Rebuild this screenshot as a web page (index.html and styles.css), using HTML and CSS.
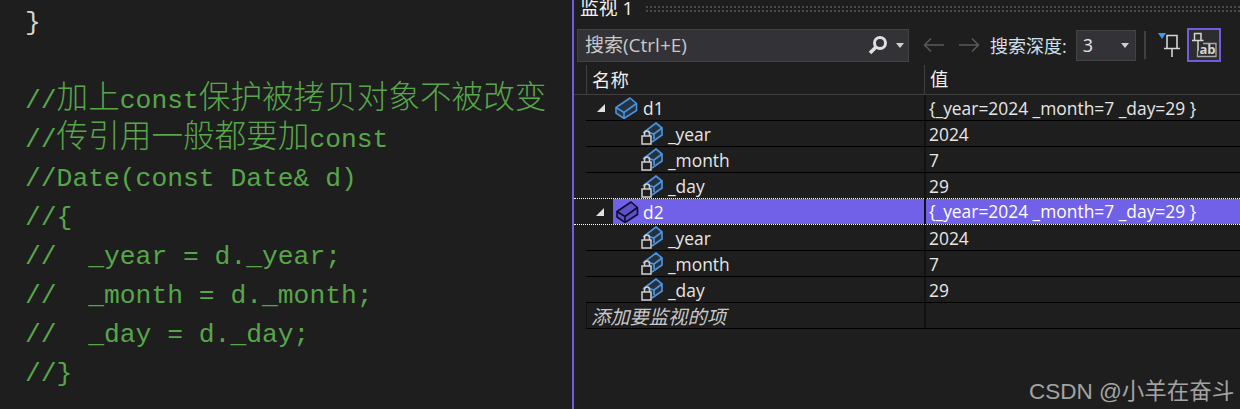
FILE: index.html
```html
<!DOCTYPE html>
<html lang="zh">
<head>
<meta charset="utf-8">
<title>监视 1</title>
<link rel="stylesheet" href="styles.css">
</head>
<body>
<svg class="defs" width="0" height="0" aria-hidden="true">
  <symbol id="box" viewBox="0 0 23 22">
    <path d="M1 10.500 15 1l6.500 5.500v7L9 21.500 1 16z" fill="currentColor" fill-opacity=".18" stroke="currentColor" stroke-width="1.600" stroke-linejoin="round"/>
    <path d="M1 10.500 9 15.500 21.500 6.500M9 15.500v6" fill="none" stroke="currentColor" stroke-width="1.600"/>
  </symbol>
  <symbol id="member" viewBox="0 0 22 23">
    <path d="M2 11 15 1l6 5v7l-10 7-6-4z" fill="#25313d"/>
    <path d="M2 11 15 1l6 5v7l-10 7M8 10.500l5 1.500 8-6M13 12v5" fill="none" stroke="#4a93e0" stroke-width="1.700"/>
    <path d="M3.500 14v-2.500a2.500 2.500 0 0 1 5 0V14" fill="none" stroke="#d0d0d0" stroke-width="1.500"/>
    <rect x="1" y="14" width="9" height="8" fill="#1e1e1e" stroke="#d0d0d0" stroke-width="1.500"/>
  </symbol>
</svg>

<main class="app">
  <section class="editor">
    <div class="code-line">{</div>
    <div class="code-line">}</div>
    <div class="code-line">&nbsp;</div>
    <div class="code-line comment">//<span class="cjk">加上</span>const<span class="cjk">保护被拷贝对象不被改变</span></div>
    <div class="code-line comment">//<span class="cjk">传引用一般都要加</span>const</div>
    <div class="code-line comment">//Date(const Date&amp; d)</div>
    <div class="code-line comment">//{</div>
    <div class="code-line comment">//  _year = d._year;</div>
    <div class="code-line comment">//  _month = d._month;</div>
    <div class="code-line comment">//  _day = d._day;</div>
    <div class="code-line comment">//}</div>
  </section>

  <section class="watch">
    <header class="title-bar">
      <span class="title">监视 1</span>
      <span class="grip"></span>
    </header>

    <div class="toolbar">
      <div class="search">
        <span class="search-text">搜索(Ctrl+E)</span>
        <svg class="search-icon" width="22" height="20" viewBox="0 0 22 20">
          <circle cx="12" cy="8" r="5.500" fill="none" stroke="#e0e0e0" stroke-width="3"/>
          <path d="M8 12 2 18" stroke="#e0e0e0" stroke-width="3.500"/>
        </svg>
        <span class="caret"></span>
      </div>
      <svg class="nav" width="24" height="16" viewBox="0 0 24 16"><path d="M22 8H3M9 1.500 2.500 8 9 14.500" fill="none" stroke="#5a5a5a" stroke-width="1.500"/></svg>
      <svg class="nav" width="24" height="16" viewBox="0 0 24 16"><path d="M2 8h19M15 1.500 21.500 8 15 14.500" fill="none" stroke="#5a5a5a" stroke-width="1.500"/></svg>
      <label class="depth-label">搜索深度:</label>
      <div class="depth"><span>3</span><span class="caret"></span></div>
      <span class="sep"></span>
      <svg class="pin" width="24" height="28" viewBox="0 0 24 28">
        <path d="M1 2h8L5 8z" fill="#3d9bf0"/>
        <path d="M11 4.500h10v13H11zM8 17.500h16M16 17.500V26" transform="translate(-1 0)" fill="none" stroke="#d4d4d4" stroke-width="1.600"/>
      </svg>
      <button class="hex-btn" type="button" aria-label="ab">
        <svg width="30" height="30" viewBox="0 0 30 30">
          <path d="M5.500 3.500h6.500v7H5.500zM3 10.500h11.500M9 10.500V21" fill="none" stroke="#d4d4d4" stroke-width="1.500"/>
          <path d="M14 13.500h13v13H8.500V21" fill="none" stroke="#a8a8a8" stroke-width="1.300"/>
          <text x="10.500" y="24" class="ab">ab</text>
        </svg>
      </button>
    </div>

    <div class="table">
      <div class="head">
        <div class="col-name">名称</div>
        <div class="col-value">值</div>
      </div>

      <div class="row">
        <div class="col-name lvl0"><span class="tri"></span><svg class="ico-box"><use href="#box"/></svg><span class="label">d1</span></div>
        <div class="col-value">{_year=2024 _month=7 _day=29 }</div>
      </div>
      <div class="row">
        <div class="col-name lvl1"><svg class="ico-mem"><use href="#member"/></svg><span class="label">_year</span></div>
        <div class="col-value">2024</div>
      </div>
      <div class="row">
        <div class="col-name lvl1"><svg class="ico-mem"><use href="#member"/></svg><span class="label">_month</span></div>
        <div class="col-value">7</div>
      </div>
      <div class="row before-selected">
        <div class="col-name lvl1"><svg class="ico-mem"><use href="#member"/></svg><span class="label">_day</span></div>
        <div class="col-value">29</div>
      </div>
      <div class="row selected">
        <div class="col-name lvl0"><span class="tri"></span><span class="sel-fill"><svg class="ico-box dark"><use href="#box"/></svg><span class="label">d2</span></span></div>
        <div class="col-value">{_year=2024 _month=7 _day=29 }</div>
      </div>
      <div class="row">
        <div class="col-name lvl1"><svg class="ico-mem"><use href="#member"/></svg><span class="label">_year</span></div>
        <div class="col-value">2024</div>
      </div>
      <div class="row">
        <div class="col-name lvl1"><svg class="ico-mem"><use href="#member"/></svg><span class="label">_month</span></div>
        <div class="col-value">7</div>
      </div>
      <div class="row">
        <div class="col-name lvl1"><svg class="ico-mem"><use href="#member"/></svg><span class="label">_day</span></div>
        <div class="col-value">29</div>
      </div>
      <div class="row add">
        <div class="col-name">添加要监视的项</div>
        <div class="col-value"></div>
      </div>
    </div>
  </section>
</main>
<div class="watermark">CSDN @小羊在奋斗</div>
</body>
</html>
```
FILE: styles.css
```css
* { box-sizing: border-box; }
html, body { margin: 0; height: 100%; overflow: hidden; background: #1e1e1e; }
.defs { position: absolute; }

.app { display: flex; height: 409px; overflow: hidden; }

.editor {
  width: 572px;
  flex: none;
  padding-left: 25px;
  margin-top: -35px;
  font: 26.330px/39px "Liberation Mono", monospace;
  color: #d4d4d4;
}
.code-line { height: 39px; white-space: pre; }
.comment { color: #57a64a; }
.cjk { font-family: "Noto Sans CJK SC", sans-serif; font-size: 31.600px; line-height: 0; font-weight: 300; }

.watch {
  flex: 1;
  border-left: 2px solid #6f5fe0;
  font: 17.400px "Open Sans", "Noto Sans CJK SC", sans-serif;
  color: #e6e6e6;
  min-width: 0;
}

.title-bar { display: flex; align-items: center; height: 17px; padding-left: 6px; gap: 12px; }
.title { font-size: 18.800px; line-height: 17px; color: #f0f0f0; white-space: nowrap; }
.grip {
  flex: 1;
  height: 8px;
  background-image: radial-gradient(#4a4a4a 0.8px, transparent 1px);
  background-size: 4px 4px;
}

.toolbar { display: flex; align-items: center; height: 34px; margin-top: 11px; padding-left: 3px; }
.search {
  width: 332px;
  height: 33px;
  display: flex;
  align-items: center;
  background: #333337;
  border: 1px solid #434346;
  padding-left: 7px;
  padding-right: 4px;
  color: #c8c8c8;
  font-size: 19px;
}
.search-text { flex: 1; line-height: 31px; height: 31px; }
.search-icon { margin-right: 6px; }
.caret { width: 0; height: 0; border: 4.500px solid transparent; border-top: 5px solid #d0d0d0; border-bottom: 0; }
.nav { margin-left: 13px; flex: none; }
.nav + .nav { margin-left: 11px; }
.depth-label { margin-left: 9px; color: #cfe0ee; font-size: 18px; white-space: nowrap; }
.depth {
  margin-left: 9px;
  width: 60px;
  height: 31px;
  display: flex;
  align-items: center;
  justify-content: space-between;
  background: #333337;
  border: 1px solid #434346;
  padding: 0 6px;
  font-size: 18px;
}
.sep { width: 2px; height: 28px; background: #3f3f46; margin-left: 8px; }
.pin { margin-left: 11px; flex: none; }
.hex-btn {
  margin-left: 6px;
  width: 34px;
  height: 34px;
  padding: 0;
  background: #2d2d30;
  border: 2px solid #6f5fe0;
  display: flex;
  align-items: center;
  justify-content: center;
}
.ab { font: bold 13px "Open Sans", sans-serif; fill: #d4d4d4; }

.table { margin-top: 3px; }
.head { display: flex; height: 30px; border-bottom: 1px solid #3f3f3f; font-size: 18.400px; line-height: 27px; align-items: stretch; color: #f0f0f0; }
.head .col-name { margin-left: 12px; border-left: 1px solid #3f3f3f; padding-left: 5px; width: 338px; }
.head .col-value { border-left: 1px solid #3f3f3f; padding-left: 5px; }

.row { display: flex; height: 26px; margin-left: 12px; border-bottom: 1px solid #000; line-height: 26px; white-space: nowrap; }
.col-name { width: 338px; flex: none; display: flex; align-items: center; }
.col-value { flex: 1; padding-left: 3px; border-left: 2px solid #111; }
.label { line-height: 24px; }
.lvl0 { padding-left: 11px; }
.lvl1 { padding-left: 55px; }
.tri { width: 0; height: 0; border-style: solid; border-width: 0 0 8px 8px; border-color: transparent transparent #e0e0e0 transparent; margin-right: 10px; flex: none; }
.ico-box { width: 23px; height: 22px; margin-right: 5px; color: #4a93e0; flex: none; }
.ico-box.dark { color: #0d0d2a; margin-left: 3px; margin-right: 4px; }
.ico-mem { width: 22px; height: 23px; margin-right: 5px; flex: none; }

.selected {
  margin-left: 0;
  padding-left: 12px;
  border-top: 1px dotted #fff;
  border-bottom: 1px dotted #fff;
  margin-top: -1px;
  height: 27px;
}
.selected .col-name { height: 25px; padding-left: 10px; }
.selected .tri { margin-right: 9px; }
.selected .col-value { background: #7160e8; color: #fff; height: 25px; line-height: 25px; }
.sel-fill { flex: 1; height: 25px; display: flex; align-items: center; background: #7160e8; color: #fff; }
.before-selected { border-bottom: 0; }

.add { border-left: 1px solid #111; }
.add .col-name { width: 337px; padding-left: 4px; padding-top: 2px; font-style: italic; font-size: 19.300px; color: #c8c8c8; }

.watermark {
  position: absolute;
  left: 1029px;
  top: 373px;
  font: 22.500px "Liberation Sans", "Noto Sans CJK SC", sans-serif;
  color: #a3a3a3;
  white-space: nowrap;
}
```
